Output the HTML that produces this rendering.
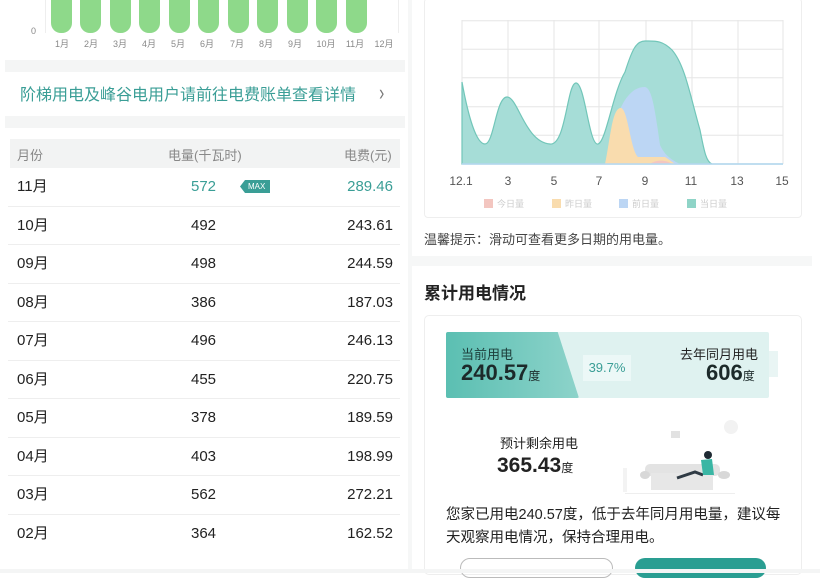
<!DOCTYPE html>
<html><head><meta charset="utf-8"><style>
*{margin:0;padding:0;box-sizing:border-box}
body{width:820px;height:573px;overflow:hidden;background:#fff;font-family:"Liberation Sans","Noto Sans CJK SC",sans-serif;position:relative;color:#222}
.a{position:absolute;white-space:nowrap}
.bar{position:absolute;top:0;width:21px;height:33px;background:#8ed98a;border-radius:0 0 10px 10px}
.ml{position:absolute;top:37px;font-size:9px;color:#888;width:24px;text-align:center}
.row{position:absolute;left:8px;width:392px;height:38.5px;border-bottom:1px solid #eee;font-size:15px}
.row span{position:absolute;top:0;line-height:38px;height:38px}
</style></head><body>
<!-- left column -->
<div class="a" style="left:31px;top:26px;font-size:9px;color:#888">0</div>
<div class="a" style="left:45px;top:0;width:1px;height:33px;background:#eee"></div>
<div class="a" style="left:398px;top:0;width:1px;height:33px;background:#eee"></div>
<div class="bar" style="left:51px"></div><div class="bar" style="left:80px"></div><div class="bar" style="left:110px"></div><div class="bar" style="left:139px"></div><div class="bar" style="left:169px"></div><div class="bar" style="left:198px"></div><div class="bar" style="left:228px"></div><div class="bar" style="left:257px"></div><div class="bar" style="left:287px"></div><div class="bar" style="left:316px"></div><div class="bar" style="left:346px"></div>
<div class="ml" style="left:50px">1月</div><div class="ml" style="left:79px">2月</div><div class="ml" style="left:108px">3月</div><div class="ml" style="left:137px">4月</div><div class="ml" style="left:166px">5月</div><div class="ml" style="left:195px">6月</div><div class="ml" style="left:225px">7月</div><div class="ml" style="left:254px">8月</div><div class="ml" style="left:283px">9月</div><div class="ml" style="left:314px">10月</div><div class="ml" style="left:343px">11月</div><div class="ml" style="left:372px">12月</div>
<div class="a" style="left:5px;top:60px;width:400px;height:12px;background:#f4f5f5"></div>
<div class="a" style="left:20px;top:81px;font-size:16px;color:#3a9e96">阶梯用电及峰谷电用户请前往电费账单查看详情</div>
<div class="a" style="left:378px;top:80px;font-size:22px;color:#777;transform:scaleX(0.7)">›</div>
<div class="a" style="left:5px;top:116px;width:400px;height:12px;background:#f4f5f5"></div>
<div class="a" style="left:10px;top:139px;width:390px;height:29px;background:#f2f3f3"></div>
<div class="a" style="left:17px;top:145px;font-size:13px;color:#888">月份</div>
<div class="a" style="left:168px;top:145px;font-size:13px;color:#888">电量(千瓦时)</div>
<div class="a" style="left:344px;top:145px;font-size:13px;color:#888">电费(元)</div>
<div class="row" style="top:168px"><span style="left:9px">11月</span><span style="left:183px;color:#3a9e96">572</span><span style="left:232px;top:12px;height:13px;line-height:9px;background:#3a9e96;color:#fff;font-size:8px;padding:2px 5px 2px 8px;clip-path:polygon(5px 0,100% 0,100% 100%,5px 100%,0 50%)">MAX</span><span style="right:7px;color:#3a9e96">289.46</span></div>
<div class="row" style="top:206.5px"><span style="left:9px">10月</span><span style="left:183px">492</span><span style="right:7px">243.61</span></div>
<div class="row" style="top:245px"><span style="left:9px">09月</span><span style="left:183px">498</span><span style="right:7px">244.59</span></div>
<div class="row" style="top:283.5px"><span style="left:9px">08月</span><span style="left:183px">386</span><span style="right:7px">187.03</span></div>
<div class="row" style="top:322px"><span style="left:9px">07月</span><span style="left:183px">496</span><span style="right:7px">246.13</span></div>
<div class="row" style="top:360.5px"><span style="left:9px">06月</span><span style="left:183px">455</span><span style="right:7px">220.75</span></div>
<div class="row" style="top:399px"><span style="left:9px">05月</span><span style="left:183px">378</span><span style="right:7px">189.59</span></div>
<div class="row" style="top:437.5px"><span style="left:9px">04月</span><span style="left:183px">403</span><span style="right:7px">198.99</span></div>
<div class="row" style="top:476px"><span style="left:9px">03月</span><span style="left:183px">562</span><span style="right:7px">272.21</span></div>
<div class="row" style="top:514.5px;border:none"><span style="left:9px">02月</span><span style="left:183px">364</span><span style="right:7px">162.52</span></div>
<div class="a" style="left:408px;top:0;width:4px;height:573px;background:#f6f7f7"></div>
<!-- right chart card -->
<div class="a" style="left:424px;top:-2px;width:378px;height:220px;border:1px solid #eee;border-radius:4px"></div>
<svg class="a" style="left:0;top:0" width="820" height="230">
<g stroke="#e6e6e6" stroke-width="1">
<line x1="462" y1="20.7" x2="783" y2="20.7"/><line x1="462" y1="49.3" x2="783" y2="49.3"/><line x1="462" y1="77.7" x2="783" y2="77.7"/><line x1="462" y1="106.7" x2="783" y2="106.7"/><line x1="462" y1="135.3" x2="783" y2="135.3"/>
<line x1="462" y1="20" x2="462" y2="164"/><line x1="508" y1="20" x2="508" y2="164"/><line x1="554" y1="20" x2="554" y2="164"/><line x1="599" y1="20" x2="599" y2="164"/><line x1="646" y1="20" x2="646" y2="164"/><line x1="692" y1="20" x2="692" y2="164"/><line x1="738" y1="20" x2="738" y2="164"/><line x1="783" y1="20" x2="783" y2="164"/>
</g>
<path d="M462,82 C468,115 476,144 485,144 C494,144 496,97 507,97 C518,97 525,142 550,144 C566,146 567,83 576,83 C585,83 589,146 598,144 C606,142 613,92 625,72 C632,50 636,41 645,41 C655,41 662,40 672,50 C685,65 690,95 700,130 C704,150 706,162 712,164 L783,164 L462,164 Z" fill="#a6ddd7" stroke="#72c6b9" stroke-width="1.2"/>
<path d="M607,164 C612,140 615,115 625,100 C632,90 638,87 645,87 C652,88 655,110 660,145 C665,156 672,160 680,164 Z" fill="#bcd6f4"/>
<path d="M605,164 C610,140 612,110 620,108 C628,106 630,150 638,157 L665,157 C670,160 673,163 676,164 Z" fill="#f9dcae"/>
<path d="M650,164 C655,160 665,159 672,164 Z" fill="#f3c6c0"/>
<line x1="462" y1="164" x2="783" y2="164" stroke="#b7d8f2" stroke-width="1.5"/>
<g font-size="12" fill="#555" text-anchor="middle" font-family="Liberation Sans,sans-serif">
<text x="461" y="185">12.1</text><text x="508" y="185">3</text><text x="554" y="185">5</text><text x="599" y="185">7</text><text x="645" y="185">9</text><text x="691" y="185">11</text><text x="737" y="185">13</text><text x="782" y="185">15</text></g>
<rect x="484" y="199" width="9" height="9" fill="#f3c6c0"/><rect x="552" y="199" width="9" height="9" fill="#f9dcae"/><rect x="619" y="199" width="9" height="9" fill="#bcd6f4"/><rect x="687" y="199" width="9" height="9" fill="#8fd4c7"/>
<g font-size="9" fill="#ccc"><text x="497" y="207">今日量</text><text x="565" y="207">昨日量</text><text x="632" y="207">前日量</text><text x="700" y="207">当日量</text></g>
</svg>
<div class="a" style="left:424px;top:229px;font-size:13px;color:#444">温馨提示：滑动可查看更多日期的用电量。</div>
<div class="a" style="left:412px;top:256px;width:400px;height:10px;background:#f6f7f7"></div>
<div class="a" style="left:424px;top:279px;font-size:17px;font-weight:bold;color:#222">累计用电情况</div>
<div class="a" style="left:424px;top:315px;width:378px;height:260px;border:1px solid #eee;border-radius:5px"></div>
<div class="a" style="left:446px;top:332px;width:323px;height:66px;background:#dff2f0;border-radius:2px"></div>
<div class="a" style="left:769px;top:351px;width:9px;height:26px;background:#e9f5f4"></div>
<div class="a" style="left:446px;top:332px;width:133px;height:66px;background:linear-gradient(90deg,#5bbfb2,#8dd3ca);clip-path:polygon(0 0,84% 0,100% 100%,0 100%);border-radius:2px"></div>
<div class="a" style="left:461px;top:344px;font-size:13px;color:#1c3d3a">当前用电</div>
<div class="a" style="left:461px;top:360px;font-size:22px;font-weight:bold;color:#1c2a2a">240.57<span style="font-size:12px;font-weight:normal">度</span></div>
<div class="a" style="left:583px;top:355px;width:48px;height:26px;background:#ecf8f7;color:#3a9e96;font-size:13px;text-align:center;line-height:26px">39.7%</div>
<div class="a" style="left:680px;top:344px;font-size:13px;color:#222">去年同月用电</div>
<div class="a" style="left:706px;top:360px;font-size:22px;font-weight:bold;color:#1c2a2a">606<span style="font-size:12px;font-weight:normal">度</span></div>
<div class="a" style="left:500px;top:433px;font-size:13px;color:#222">预计剩余用电</div>
<div class="a" style="left:497px;top:454px;font-size:21px;font-weight:bold;color:#222">365.43<span style="font-size:12px;font-weight:normal">度</span></div>
<svg class="a" style="left:615px;top:415px" width="135" height="80">
<circle cx="116" cy="12" r="7" fill="#f2f2f2"/><rect x="56" y="16" width="9" height="7" fill="#e2e2e2"/>
<rect x="8" y="53" width="4" height="24" fill="#f3f3f3"/><rect x="10" y="78" width="110" height="1" fill="#eee"/>
<rect x="30" y="49" width="75" height="12" rx="5" fill="#e3e3e3"/><rect x="36" y="58" width="62" height="17" fill="#e7e7e7"/>
<ellipse cx="30" cy="60" rx="5" ry="4" fill="#d8d8d8"/><ellipse cx="109" cy="60" rx="6" ry="4" fill="#d8d8d8"/>
<path d="M62,63 L80,57 L88,60" stroke="#2f3a44" stroke-width="3" fill="none"/>
<path d="M86,45 L97,44 L99,60 L88,60 Z" fill="#3ab6a4"/><circle cx="93" cy="40" r="4" fill="#1f2a33"/>
</svg>
<div class="a" style="left:446px;top:504px;font-size:14.5px;color:#222;line-height:23px;white-space:normal;width:340px">您家已用电240.57度，低于去年同月用电量，建议每天观察用电情况，保持合理用电。</div>
<div class="a" style="left:460px;top:558px;width:153px;height:20px;border:1px solid #bbb;border-radius:10px"></div>
<div class="a" style="left:635px;top:558px;width:131px;height:20px;background:#2a9e92;border-radius:10px"></div>
<div class="a" style="left:0;top:569px;width:820px;height:4px;background:#f4f5f5"></div>
</body></html>
